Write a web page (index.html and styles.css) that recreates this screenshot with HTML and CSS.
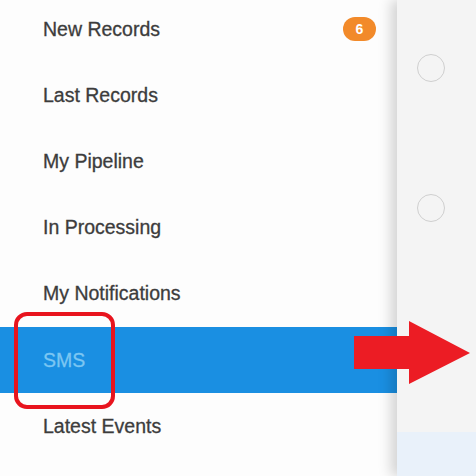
FILE: index.html
```html
<!DOCTYPE html>
<html>
<head>
<meta charset="utf-8">
<link rel="stylesheet" href="styles.css">
</head>
<body>
<div class="app">
  <nav class="drawer">
    <ul class="menu">
      <li class="item"><span class="label">New Records</span><span class="badge">6</span></li>
      <li class="item"><span class="label">Last Records</span></li>
      <li class="item"><span class="label">My Pipeline</span></li>
      <li class="item"><span class="label">In Processing</span></li>
      <li class="item"><span class="label">My Notifications</span></li>
      <li class="item active"><span class="label">SMS</span></li>
      <li class="item"><span class="label">Latest Events</span></li>
    </ul>
  </nav>
  <main class="page">
    <div class="radios">
      <span class="radio"></span>
      <span class="radio"></span>
    </div>
    <div class="footer-band"></div>
  </main>
</div>
<div class="highlight"></div>
<svg class="arrow" width="118" height="65" viewBox="0 0 118 65">
  <polygon points="0,15 55,15 55,0 116,32 55,63 55,48 0,48" fill="#ec1c24"/>
</svg>
</body>
</html>
```

FILE: styles.css
```css
html, body {
  margin: 0;
  padding: 0;
  width: 476px;
  height: 476px;
  overflow: hidden;
  background: #f3f3f3;
  font-family: "Liberation Sans", Arial, sans-serif;
}
.app {
  display: flex;
  width: 476px;
  height: 476px;
}
.drawer {
  width: 397px;
  flex: none;
  background: #fdfdfd;
}
.menu {
  list-style: none;
  margin: -4px 0 0 0;
  padding: 0;
}
.item {
  height: 66px;
  display: flex;
  align-items: center;
  padding: 0 21px 0 43px;
  font-size: 19.5px;
  color: #3c3c3c;
  -webkit-text-stroke: 0.3px currentColor;
}
.label {
  flex: 1;
}
.item.active {
  background: #1a8fe2;
  color: #7cc6f2;
  margin-top: 1px;
}
.badge {
  width: 33px;
  height: 24px;
  border-radius: 12px;
  background: #f28a2a;
  color: #fff;
  font-weight: bold;
  font-size: 14px;
  -webkit-text-stroke: 0;
  display: flex;
  align-items: center;
  justify-content: center;
}
.page {
  flex: 1;
  position: relative;
  z-index: 1;
  background: #f4f4f4;
  box-shadow: -6px 0 12px rgba(0,0,0,0.17);
  display: flex;
  flex-direction: column;
}
.radios {
  flex: 1;
  display: flex;
  flex-direction: column;
  gap: 112px;
  padding: 54px 0 0 20px;
}
.radio {
  width: 26px;
  height: 26px;
  border: 1px solid #cfcfcf;
  border-radius: 50%;
  display: block;
}
.footer-band {
  height: 44px;
  background: #e9f1fa;
}
.highlight {
  position: absolute;
  left: 14px;
  top: 312px;
  width: 93px;
  height: 89px;
  border: 4px solid #e8141e;
  border-radius: 13px;
  z-index: 5;
}
.arrow {
  position: absolute;
  left: 354px;
  top: 321px;
  z-index: 5;
}
```
